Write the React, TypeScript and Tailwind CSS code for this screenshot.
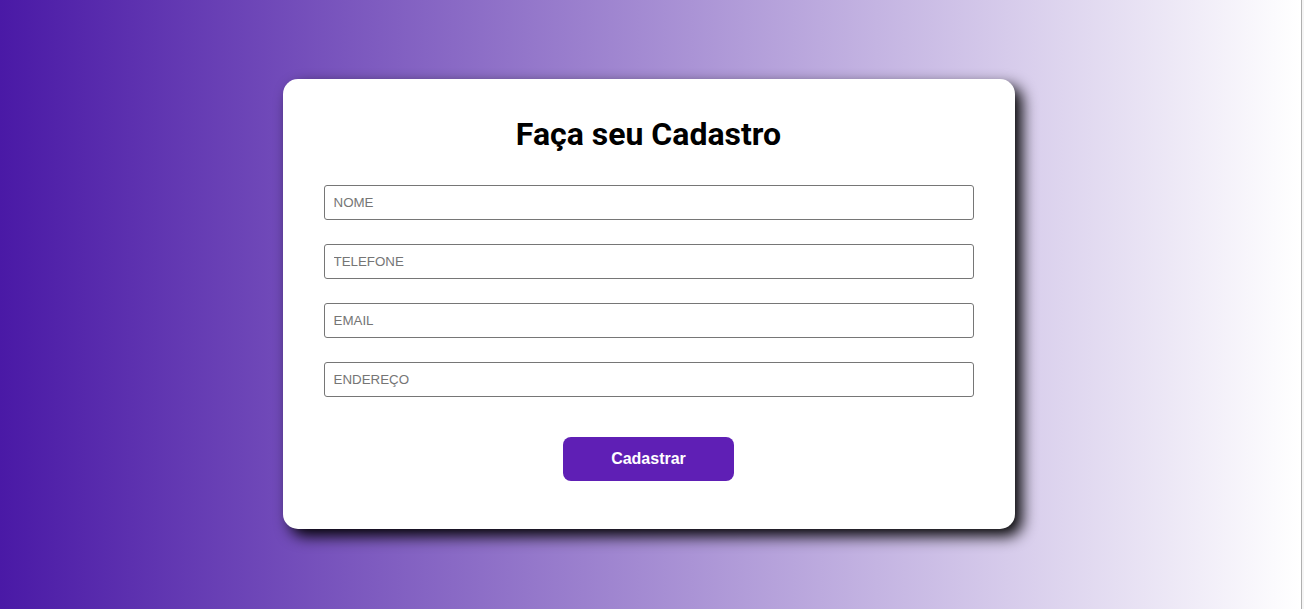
import React from "react";

const FIELDS = ["NOME", "TELEFONE", "EMAIL", "ENDEREÇO"];

export default function App() {
  return (
    <div className="flex h-[609px] w-full overflow-hidden">
      <div className="flex flex-1 items-start justify-center border-r border-[#b0b0b0] bg-[linear-gradient(to_right,#4a19a6,#ffffff)] pr-[4px] pt-[79px]">
        <form
          className="flex w-[732px] h-[450px] flex-col items-center rounded-[15px] bg-white px-[41px] pt-[36px] shadow-[7px_7px_15px_#000]"
          onSubmit={(e) => e.preventDefault()}
        >
          <h1 className="text-[32px] font-bold leading-[38px] text-black [font-family:Roboto,sans-serif]">
            Faça seu Cadastro
          </h1>
          <div className="mt-[32px] flex w-full flex-col gap-[24px]">
            {FIELDS.map((f) => (
              <input
                key={f}
                placeholder={f}
                className="h-[35px] w-full rounded-[3px] border border-[#767676] px-[9px] text-[13.33px] text-black placeholder:text-[#757575] [font-family:'Liberation_Sans',Arial,sans-serif] outline-none"
              />
            ))}
          </div>
          <button
            type="submit"
            className="mt-[40px] h-[44px] w-[171px] rounded-[8px] bg-[#5f1fb5] text-[16px] font-bold text-white [font-family:'Liberation_Sans',Arial,sans-serif]"
          >
            Cadastrar
          </button>
        </form>
      </div>
      <div className="w-[2px] bg-[#f5f5f5]" />
    </div>
  );
}
